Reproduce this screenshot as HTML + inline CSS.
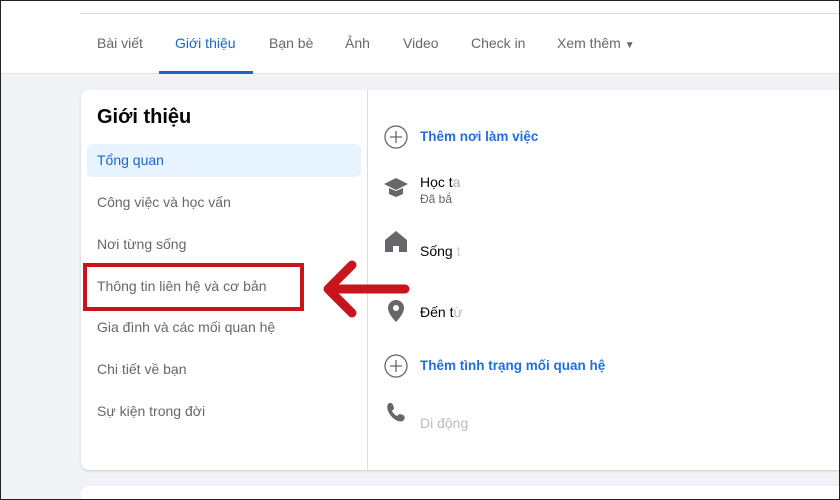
<!DOCTYPE html>
<html><head><meta charset="utf-8"><style>
*{margin:0;padding:0;box-sizing:border-box}
html,body{width:840px;height:500px;overflow:hidden}
body{background:#f0f2f5;font-family:"Liberation Sans",sans-serif;position:relative}
.top{position:absolute;left:0;top:0;width:840px;height:74px;background:#fff;border-bottom:1px solid #e0e2e6}
.top .ln{position:absolute;left:80px;top:13px;right:0;height:1px;background:#dadde1}
.tab{position:absolute;top:35px;font-size:14px;color:#65676b}
.card{position:absolute;left:81px;top:90px;width:780px;height:380px;background:#fff;border-radius:8px;box-shadow:0 1px 2px rgba(0,0,0,.15)}
.card2{position:absolute;left:81px;top:486px;width:780px;height:14px;background:#fff;border-radius:8px 8px 0 0}
.div{position:absolute;left:367px;top:90px;width:1px;height:380px;background:#dadde1}
.h{position:absolute;left:97px;top:106px;font-size:20px;font-weight:bold;color:#050505}
.it{position:absolute;left:97px;font-size:14px;color:#65676b}
.sel{position:absolute;left:87px;top:144px;width:274px;height:33px;background:#e7f3ff;border-radius:6px}
.r{position:absolute;left:420px;font-size:14px;color:#050505}
.b{color:#216fdb;font-weight:bold;font-size:13.5px}
.frame{position:absolute;left:0;top:0;width:840px;height:500px;border:1px solid #222;pointer-events:none}
</style></head><body>
<div class="top"><div class="ln"></div>
<span class="tab" style="left:97px">Bài viết</span>
<span class="tab" style="left:175px;color:#1b66c9">Giới thiệu</span>
<div style="position:absolute;left:159px;top:71px;width:94px;height:3px;background:#1b66c9"></div>
<span class="tab" style="left:269px">Bạn bè</span>
<span class="tab" style="left:345px">Ảnh</span>
<span class="tab" style="left:403px">Video</span>
<span class="tab" style="left:471px">Check in</span>
<span class="tab" style="left:557px">Xem thêm <span style="font-size:10px">▼</span></span>
</div>
<div class="card"></div><div class="card2"></div><div class="div"></div>
<div class="h">Giới thiệu</div>
<div class="sel"></div>
<div class="it" style="top:152px;color:#1b66c9">Tổng quan</div>
<div class="it" style="top:194px">Công việc và học vấn</div>
<div class="it" style="top:236px">Nơi từng sống</div>
<div class="it" style="top:278px">Thông tin liên hệ và cơ bản</div>
<div class="it" style="top:319px">Gia đình và các mối quan hệ</div>
<div class="it" style="top:361px">Chi tiết về bạn</div>
<div class="it" style="top:403px">Sự kiện trong đời</div>
<div style="position:absolute;left:83px;top:263px;width:221px;height:48px;border:4px solid #c8141a"></div>
<svg style="position:absolute;left:0;top:0" width="840" height="500"><g stroke="#c8141a" stroke-width="9" stroke-linecap="round" stroke-linejoin="round" fill="none"><path d="M405 289H332M352 265L328 289L352 313"/></g>
<g fill="none" stroke="#65676b" stroke-width="1.3"><circle cx="396" cy="137" r="11"/><path d="M396 131v12M390 137h12"/><circle cx="396" cy="366" r="11"/><path d="M396 360v12M390 366h12"/></g>
<g fill="#65676b"><path d="M384 184l12-6 12 6-12 6z"/><path d="M389 188v6l7 3 7-3v-6l-7 3z"/><path d="M385 240l11-9 11 9v12h-8v-6h-6v6h-8z"/><path d="M396 300a8 8 0 0 1 8 8c0 6-8 14-8 14s-8-8-8-14a8 8 0 0 1 8-8z"/><path d="M388 404c2-2 4-1 5 1l1 3c0 2-2 2-2 3 1 2 3 4 5 5 1 0 1-2 3-2l3 1c2 1 2 3 1 5-3 3-8 1-12-3s-6-10-4-13z"/></g>
<circle cx="396" cy="308" r="3" fill="#fff"/></svg>
<div class="r b" style="top:129px">Thêm nơi làm việc</div>
<div class="r" style="top:174px">Học t<span style="color:#aaa">a</span></div>
<div class="r" style="top:192px;font-size:12px;color:#65676b">Đã bắ</div>
<div class="r" style="top:243px">Sống <span style="color:#ccc">t</span></div>
<div class="r" style="top:304px">Đến t<span style="color:#bbb">ừ</span></div>
<div class="r b" style="top:358px">Thêm tình trạng mối quan hệ</div>
<div class="r" style="top:415px;color:#bbb">Di động</div>
<div class="frame"></div>
</body></html>
